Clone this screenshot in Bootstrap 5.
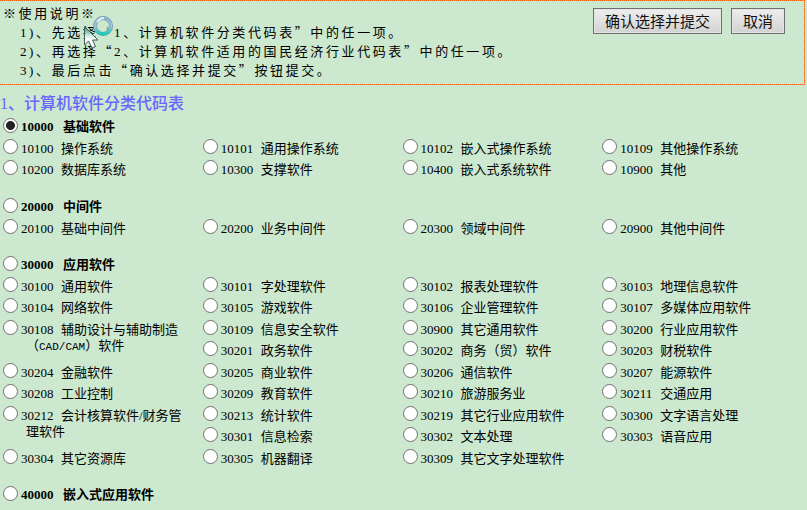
<!DOCTYPE html>
<html lang="zh-CN">
<head>
<meta charset="utf-8">
<meta name="viewport" content="width=device-width, initial-scale=1">
<title>计算机软件分类代码表</title>
<link href="https://cdn.jsdelivr.net/npm/bootstrap@5.3.0/dist/css/bootstrap.min.css" rel="stylesheet">
<style>
body{background:#cce8cf;color:#000;font:13px/16px "Liberation Serif","Noto Sans CJK SC",serif;overflow-x:hidden}
.guide{border:1px dotted #ff5a00;border-left:0;background:linear-gradient(#cce8cf,#cce8cf) padding-box,#e9a878 border-box;padding:2px 19px 5px 3px;margin-right:2px;line-height:19px}
.guide-text{font-family:"Noto Sans CJK SC",sans-serif;letter-spacing:.2em}
.guide-text ol{padding-left:17px;list-style:none}
.num{font-family:"Liberation Serif",serif;line-height:0}
.button-row{gap:9px;padding-top:5px}
.btn-classic{border:1px solid #707070;border-radius:0;background:linear-gradient(#eee,#d2d2d2);color:#111;font:15px/20px "Noto Sans CJK SC",sans-serif;padding:2px 11px;box-shadow:inset 0 0 0 1px #e4e4e4}
.btn-classic:hover{background:#e5f1fb;border-color:#0078d7}
.table-title{font-size:16px;line-height:24px;color:#66f;margin:7px 0 0;font-weight:500}
.code-group{margin-bottom:15px;padding-right:8px}
.code-grid{display:grid;grid-template-columns:repeat(4,1fr);grid-auto-rows:21px 22px}
.tall{grid-row:span 2}
.opt{display:flex;align-items:flex-start;padding:1px 8px 0 3px}
.opt label{padding:2px 0 0 5px;text-indent:-5px;margin-left:3px}
.opt b,.opt i{display:inline-block;width:40px;text-indent:0;font-style:normal}
.opt b{width:42px}
.opt-head{height:22px;font-weight:700}
.opt-head .pick{margin-top:1px}
.pick{appearance:none;flex:none;width:15px;height:15px;margin:0;border:1px solid #707070;border-radius:50%;background:#fff}
.pick:checked{background:radial-gradient(circle,#222 0 4px,#fff 5px)}
.latin{font-family:"Liberation Mono",monospace;font-size:11px;line-height:0}
.pointer{left:83px;top:13px;pointer-events:none}
</style>
</head>
<body>
<header class="guide d-flex justify-content-between align-items-start position-relative">
  <div class="guide-text">
    <p class="m-0">※使用说明※</p>
    <ol class="m-0">
      <li><span class="num">1)</span>、先选择“<span class="num">1</span>、计算机软件分类代码表”中的任一项。</li>
      <li><span class="num">2)</span>、再选择“<span class="num">2</span>、计算机软件适用的国民经济行业代码表”中的任一项。</li>
      <li><span class="num">3)</span>、最后点击“确认选择并提交”按钮提交。</li>
    </ol>
  </div>
  <div class="button-row d-flex">
    <button type="submit" form="codes" class="btn btn-classic">确认选择并提交</button>
    <button type="button" class="btn btn-classic">取消</button>
  </div>
  <svg class="pointer position-absolute" width="31" height="35" viewBox="0 0 31 35" aria-hidden="true">
    <defs>
      <linearGradient id="ring" x1="0" y1="0" x2="0" y2="1"><stop offset="0" stop-color="#8fb3cc"/><stop offset=".5" stop-color="#9fc6d6"/><stop offset="1" stop-color="#17cdbd"/></linearGradient>
      <linearGradient id="arrow" x1="0" y1="0" x2="0" y2="1"><stop offset="0" stop-color="#2b8f55"/><stop offset=".4" stop-color="#bfe9dc"/><stop offset=".6" stop-color="#fff"/></linearGradient>
    </defs>
    <circle cx="20" cy="12" r="8" fill="#cce8cf" fill-opacity=".6" stroke="#6d93a7" stroke-width="4"/>
    <circle cx="20" cy="12" r="8" fill="none" stroke="url(#ring)" stroke-width="3"/>
    <path d="M14 8q3-4 7-4" fill="none" stroke="#e4f1f7" stroke-width="2"/>
    <path d="M1.500 12.500V31l4-4 3.500 7 3.500-1.500-3-6.500H15z" fill="url(#arrow)" stroke="#42575a"/>
  </svg>
</header>
<main>
<h1 class="table-title">1、计算机软件分类代码表</h1>
<form id="codes">
<section class="code-group">
  <div class="opt opt-head"><input class="pick" type="radio" name="code" id="c10000" checked><label for="c10000"><b>10000</b>基础软件</label></div>
  <div class="code-grid">
    <div class="opt"><input class="pick" type="radio" name="code" id="c10100"><label for="c10100"><i>10100</i>操作系统</label></div>
    <div class="opt"><input class="pick" type="radio" name="code" id="c10101"><label for="c10101"><i>10101</i>通用操作系统</label></div>
    <div class="opt"><input class="pick" type="radio" name="code" id="c10102"><label for="c10102"><i>10102</i>嵌入式操作系统</label></div>
    <div class="opt"><input class="pick" type="radio" name="code" id="c10109"><label for="c10109"><i>10109</i>其他操作系统</label></div>
    <div class="opt"><input class="pick" type="radio" name="code" id="c10200"><label for="c10200"><i>10200</i>数据库系统</label></div>
    <div class="opt"><input class="pick" type="radio" name="code" id="c10300"><label for="c10300"><i>10300</i>支撑软件</label></div>
    <div class="opt"><input class="pick" type="radio" name="code" id="c10400"><label for="c10400"><i>10400</i>嵌入式系统软件</label></div>
    <div class="opt"><input class="pick" type="radio" name="code" id="c10900"><label for="c10900"><i>10900</i>其他</label></div>
  </div>
</section>
<section class="code-group">
  <div class="opt opt-head"><input class="pick" type="radio" name="code" id="c20000"><label for="c20000"><b>20000</b>中间件</label></div>
  <div class="code-grid">
    <div class="opt"><input class="pick" type="radio" name="code" id="c20100"><label for="c20100"><i>20100</i>基础中间件</label></div>
    <div class="opt"><input class="pick" type="radio" name="code" id="c20200"><label for="c20200"><i>20200</i>业务中间件</label></div>
    <div class="opt"><input class="pick" type="radio" name="code" id="c20300"><label for="c20300"><i>20300</i>领域中间件</label></div>
    <div class="opt"><input class="pick" type="radio" name="code" id="c20900"><label for="c20900"><i>20900</i>其他中间件</label></div>
  </div>
</section>
<section class="code-group">
  <div class="opt opt-head"><input class="pick" type="radio" name="code" id="c30000"><label for="c30000"><b>30000</b>应用软件</label></div>
  <div class="code-grid">
    <div class="opt"><input class="pick" type="radio" name="code" id="c30100"><label for="c30100"><i>30100</i>通用软件</label></div>
    <div class="opt"><input class="pick" type="radio" name="code" id="c30101"><label for="c30101"><i>30101</i>字处理软件</label></div>
    <div class="opt"><input class="pick" type="radio" name="code" id="c30102"><label for="c30102"><i>30102</i>报表处理软件</label></div>
    <div class="opt"><input class="pick" type="radio" name="code" id="c30103"><label for="c30103"><i>30103</i>地理信息软件</label></div>
    <div class="opt"><input class="pick" type="radio" name="code" id="c30104"><label for="c30104"><i>30104</i>网络软件</label></div>
    <div class="opt"><input class="pick" type="radio" name="code" id="c30105"><label for="c30105"><i>30105</i>游戏软件</label></div>
    <div class="opt"><input class="pick" type="radio" name="code" id="c30106"><label for="c30106"><i>30106</i>企业管理软件</label></div>
    <div class="opt"><input class="pick" type="radio" name="code" id="c30107"><label for="c30107"><i>30107</i>多媒体应用软件</label></div>
    <div class="opt tall"><input class="pick" type="radio" name="code" id="c30108"><label for="c30108"><i>30108</i>辅助设计与辅助制造（<span class="latin">CAD/CAM</span>）软件</label></div>
    <div class="opt"><input class="pick" type="radio" name="code" id="c30109"><label for="c30109"><i>30109</i>信息安全软件</label></div>
    <div class="opt"><input class="pick" type="radio" name="code" id="c30900"><label for="c30900"><i>30900</i>其它通用软件</label></div>
    <div class="opt"><input class="pick" type="radio" name="code" id="c30200"><label for="c30200"><i>30200</i>行业应用软件</label></div>
    <div class="opt"><input class="pick" type="radio" name="code" id="c30201"><label for="c30201"><i>30201</i>政务软件</label></div>
    <div class="opt"><input class="pick" type="radio" name="code" id="c30202"><label for="c30202"><i>30202</i>商务（贸）软件</label></div>
    <div class="opt"><input class="pick" type="radio" name="code" id="c30203"><label for="c30203"><i>30203</i>财税软件</label></div>
    <div class="opt"><input class="pick" type="radio" name="code" id="c30204"><label for="c30204"><i>30204</i>金融软件</label></div>
    <div class="opt"><input class="pick" type="radio" name="code" id="c30205"><label for="c30205"><i>30205</i>商业软件</label></div>
    <div class="opt"><input class="pick" type="radio" name="code" id="c30206"><label for="c30206"><i>30206</i>通信软件</label></div>
    <div class="opt"><input class="pick" type="radio" name="code" id="c30207"><label for="c30207"><i>30207</i>能源软件</label></div>
    <div class="opt"><input class="pick" type="radio" name="code" id="c30208"><label for="c30208"><i>30208</i>工业控制</label></div>
    <div class="opt"><input class="pick" type="radio" name="code" id="c30209"><label for="c30209"><i>30209</i>教育软件</label></div>
    <div class="opt"><input class="pick" type="radio" name="code" id="c30210"><label for="c30210"><i>30210</i>旅游服务业</label></div>
    <div class="opt"><input class="pick" type="radio" name="code" id="c30211"><label for="c30211"><i>30211</i>交通应用</label></div>
    <div class="opt tall"><input class="pick" type="radio" name="code" id="c30212"><label for="c30212"><i>30212</i>会计核算软件/财务管理软件</label></div>
    <div class="opt"><input class="pick" type="radio" name="code" id="c30213"><label for="c30213"><i>30213</i>统计软件</label></div>
    <div class="opt"><input class="pick" type="radio" name="code" id="c30219"><label for="c30219"><i>30219</i>其它行业应用软件</label></div>
    <div class="opt"><input class="pick" type="radio" name="code" id="c30300"><label for="c30300"><i>30300</i>文字语言处理</label></div>
    <div class="opt"><input class="pick" type="radio" name="code" id="c30301"><label for="c30301"><i>30301</i>信息检索</label></div>
    <div class="opt"><input class="pick" type="radio" name="code" id="c30302"><label for="c30302"><i>30302</i>文本处理</label></div>
    <div class="opt"><input class="pick" type="radio" name="code" id="c30303"><label for="c30303"><i>30303</i>语音应用</label></div>
    <div class="opt"><input class="pick" type="radio" name="code" id="c30304"><label for="c30304"><i>30304</i>其它资源库</label></div>
    <div class="opt"><input class="pick" type="radio" name="code" id="c30305"><label for="c30305"><i>30305</i>机器翻译</label></div>
    <div class="opt"><input class="pick" type="radio" name="code" id="c30309"><label for="c30309"><i>30309</i>其它文字处理软件</label></div>
  </div>
</section>
<section class="px-0">
  <div class="opt opt-head"><input class="pick" type="radio" name="code" id="c40000"><label for="c40000"><b>40000</b>嵌入式应用软件</label></div>
</section>
</form>
</main>
<script src="https://cdn.jsdelivr.net/npm/bootstrap@5.3.0/dist/js/bootstrap.bundle.min.js"></script>
</body>
</html>
